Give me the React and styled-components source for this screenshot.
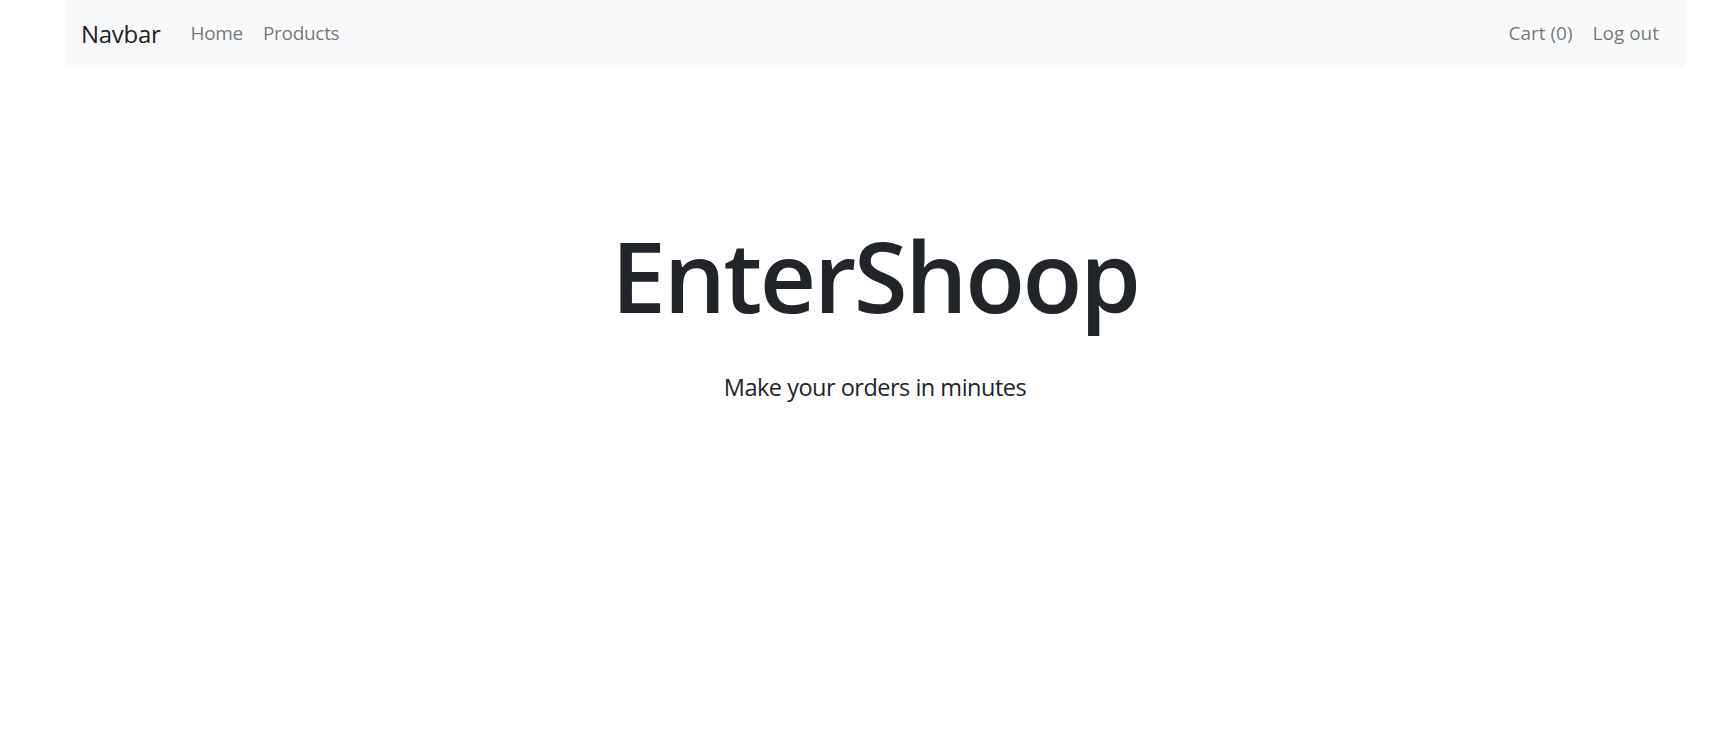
import React from "react";
import styled, { createGlobalStyle } from "styled-components";

const GlobalStyle = createGlobalStyle`
  body {
    margin: 0;
    background: #fff;
    font-family: "Open Sans", "Noto Sans", sans-serif;
    color: #212529;
  }
`;

const Page = styled.div`
  width: 1620px;
  margin-left: 65px;
`;

const Nav = styled.nav`
  height: 67px;
  background: #f8f9fa;
  display: flex;
  align-items: center;
  padding: 0 16px 1px 16px;
  box-sizing: border-box;
`;

const Brand = styled.a`
  font-size: 24px;
  color: rgba(0, 0, 0, 0.9);
  text-decoration: none;
  margin-right: 20px;
  letter-spacing: -0.3px;
`;

const Links = styled.div`
  display: flex;
  align-items: center;
  margin-left: ${(p) => (p.$right ? "auto" : "0")};
`;

const NavLink = styled.a`
  font-size: 19px;
  color: rgba(0, 0, 0, 0.55);
  text-decoration: none;
  padding: 0 10px;
  letter-spacing: ${(p) => (p.$tight ? "-0.3px" : "0")};
`;

const Hero = styled.section`
  text-align: center;
  padding-top: 150px;
`;

const Title = styled.h1`
  margin: 0;
  font-size: 98px;
  font-weight: 600;
  line-height: 1.2;
  letter-spacing: -2.4px;
`;

const Subtitle = styled.p`
  margin: 35px 0 0;
  font-size: 23.5px;
  line-height: 1.5;
  letter-spacing: -0.5px;
`;

export default function App() {
  return (
    <>
      <GlobalStyle />
      <Page>
        <Nav>
          <Brand href="#">Navbar</Brand>
          <Links>
            <NavLink href="#" $tight>Home</NavLink>
            <NavLink href="#" $tight>Products</NavLink>
          </Links>
          <Links $right>
            <NavLink href="#">Cart (0)</NavLink>
            <NavLink href="#">Log out</NavLink>
          </Links>
        </Nav>
        <Hero>
          <Title>EnterShoop</Title>
          <Subtitle>Make your orders in minutes</Subtitle>
        </Hero>
      </Page>
    </>
  );
}
